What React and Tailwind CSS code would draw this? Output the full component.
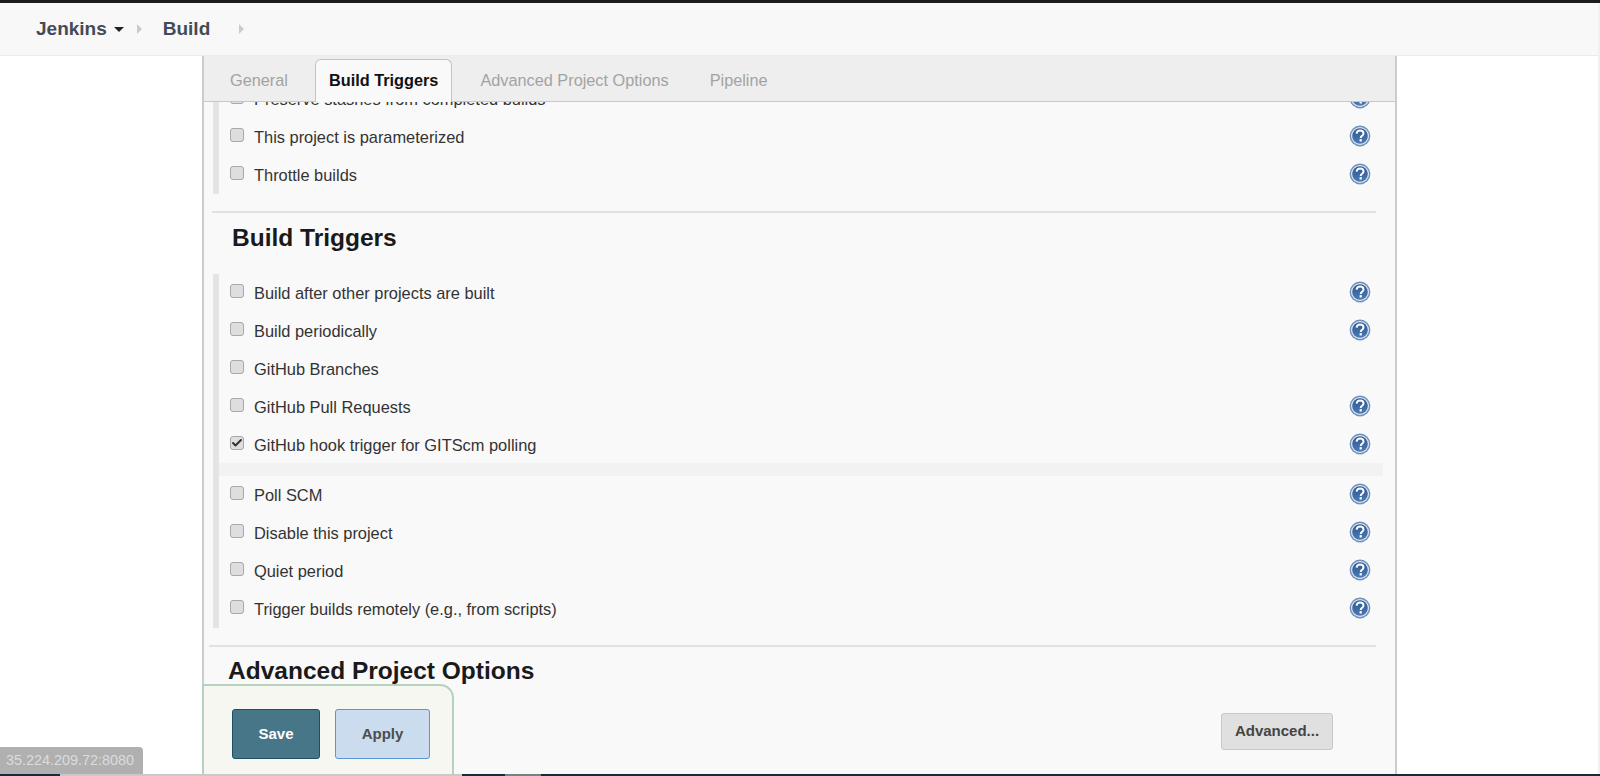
import { Check } from 'lucide-react';

const topRows = [
  { label: 'Preserve stashes from completed builds', help: true },
  { label: 'This project is parameterized', help: true },
  { label: 'Throttle builds', help: true },
];

const triggerRows = [
  { label: 'Build after other projects are built', help: true },
  { label: 'Build periodically', help: true },
  { label: 'GitHub Branches', help: false },
  { label: 'GitHub Pull Requests', help: true },
  { label: 'GitHub hook trigger for GITScm polling', help: true, checked: true },
];

const moreRows = [
  { label: 'Poll SCM', help: true },
  { label: 'Disable this project', help: true },
  { label: 'Quiet period', help: true },
  { label: 'Trigger builds remotely (e.g., from scripts)', help: true },
];

function HelpIcon() {
  return (
    <svg width="22" height="22" viewBox="0 0 22 22">
      <defs>
        <linearGradient id="helpFill" x1="0" y1="0" x2="0" y2="1">
          <stop offset="0" stopColor="#2b5793" />
          <stop offset="1" stopColor="#4f7bb3" />
        </linearGradient>
      </defs>
      <circle cx="11" cy="11" r="10.4" fill="#6f8fbc" />
      <circle cx="11" cy="11" r="9" fill="#dfe8f3" />
      <circle cx="11" cy="11" r="7.8" fill="url(#helpFill)" />
      <path d="M7.6 8.6c.2-1.9 1.6-3 3.5-3 2 0 3.4 1.1 3.4 2.8 0 1.3-.8 2-1.7 2.6-.8.6-1.1 1-1.1 1.9" fill="none" stroke="#fff" strokeWidth="2" />
      <rect x="10.6" y="14.1" width="2.2" height="2.4" fill="#fff" />
    </svg>
  );
}

function Row({ label, help, checked }) {
  return (
    <div className="h-[38px] flex items-center">
      <span className="w-[14px] h-[14px] ml-[11px] mb-[4px] rounded-[3px] border border-[#a8a8a8] bg-[#dedede] flex items-center justify-center shrink-0">
        {checked && <Check size={12} strokeWidth={4} className="text-[#333]" />}
      </span>
      <span className="ml-[10px] text-[16.4px] text-[#333]">{label}</span>
      <span className="ml-auto mr-[5px] mb-[2px] w-[22px] h-[22px]">{help && <HelpIcon />}</span>
    </div>
  );
}

function Crumb() {
  return <span className="w-0 h-0 border-y-[5px] border-y-transparent border-l-[5px] border-l-[#c8ccd0]" />;
}

function Tab({ children, active }) {
  if (active) {
    return (
      <div className="h-[43px] mb-[-1px] pb-[1px] px-[13px] mx-[13px] flex items-center bg-[#f9f9f9] border border-b-0 border-[#c4c4c4] rounded-t-[6px] text-[16.3px] font-bold text-[#111]">
        {children}
      </div>
    );
  }
  return <div className="h-[43px] pt-[2px] px-[14px] flex items-center text-[16.3px] text-[#a3a3a3]">{children}</div>;
}

export default function App() {
  return (
    <div className="relative h-[776px] overflow-hidden bg-white flex flex-col font-['Liberation_Sans',Arial,sans-serif]">
      <div className="h-[3px] bg-[#1c1c1c] shrink-0" />
      <header className="h-[53px] shrink-0 bg-[#f8f8f8] border-b border-[#e8ecef] flex items-center pl-[36px] text-[#444b57] text-[19px] font-bold">
        <span>Jenkins</span>
        <span className="ml-[7px] w-0 h-0 border-x-[5px] border-x-transparent border-t-[5px] border-t-[#222]" />
        <span className="ml-[13px] flex"><Crumb /></span>
        <span className="ml-[21px]">Build</span>
        <span className="ml-[29px] flex"><Crumb /></span>
      </header>

      <main className="flex-1 min-h-0 flex">
        <div className="w-[202px] shrink-0" />
        <section className="w-[1195px] shrink-0 border-l-2 border-r-2 border-[#cccccc] bg-[#f9f9f9] flex flex-col">
          <nav className="h-[46px] shrink-0 bg-[#eeeeee] border-b border-[#c8c8c8] flex items-end pl-[12px] relative z-10">
            <Tab>General</Tab>
            <Tab active>Build Triggers</Tab>
            <div className="h-[43px] pt-[2px] pl-[15px] flex items-center gap-[41px] text-[16.3px] text-[#a3a3a3]">
              <span>Advanced Project Options</span>
              <span>Pipeline</span>
            </div>
          </nav>

          <div className="flex-1 min-h-0 overflow-hidden">
            <div className="mt-[-22px] ml-[9px] mr-[19px]">
              <div className="border-l-[6px] border-[#e4e4e4]">
                {topRows.map((r) => <Row key={r.label} {...r} />)}
              </div>
              <div className="mt-[17px] ml-[-1px] border-t-2 border-[#e2e2e2]" />
              <h2 className="ml-[19px] mt-[8px] h-[34px] leading-[34px] text-[24.5px] font-bold text-[#1a1a1a]">Build Triggers</h2>
              <div className="mt-[19px] border-l-[6px] border-[#e4e4e4]">
                {triggerRows.map((r) => <Row key={r.label} {...r} />)}
                <div className="h-[13px] mt-[-1px] bg-[#f2f2f2] mr-[-7px]" />
                {moreRows.map((r) => <Row key={r.label} {...r} />)}
              </div>
              <div className="mt-[17px] ml-[-4px] border-t-2 border-[#e2e2e2]" />
              <h2 className="ml-[15px] mt-[9px] h-[30px] leading-[30px] text-[24.5px] font-bold text-[#1a1a1a]">Advanced Project Options</h2>
            </div>
          </div>
        </section>
      </main>

      <div className="absolute left-[202px] top-[684px] w-[252px] h-[92px] bg-[#f5f7f0] border-t-2 border-r-2 border-l-2 border-[#b5d2bf] rounded-tr-[14px] pl-[28px] pt-[23px] flex gap-[15px] items-start">
        <button className="w-[88px] h-[50px] rounded-[3px] bg-[#467688] border border-[#1f4f63] text-white text-[15px] font-bold">Save</button>
        <button className="w-[95px] h-[50px] rounded-[3px] bg-[#cadcee] border border-[#5b97d1] text-[#4d4d4d] text-[15px] font-bold">Apply</button>
      </div>

      <button className="absolute left-[1221px] top-[713px] w-[112px] h-[37px] rounded-[3px] bg-[#e0e0e0] border border-[#c8c8c8] text-[#444] text-[15px] font-bold">Advanced...</button>

      <div className="absolute left-0 top-[747px] w-[143px] h-[27px] rounded-tr-[4px] bg-[#b0b0b0] text-[#dcdcdc] text-[14.4px] flex items-center pl-[6px]">35.224.209.72:8080</div>

      <div className="absolute right-0 top-[3px] bottom-0 w-[2px] bg-[#f0f0f0]" />
      <div className="absolute left-0 right-0 bottom-0 h-[2px] flex bg-[#1b2a3a]">
        <div className="ml-[60px] w-[402px] bg-[#c9c9c9]" />
        <div className="ml-[43px] w-[36px] bg-[#7a7f85]" />
      </div>
    </div>
  );
}
